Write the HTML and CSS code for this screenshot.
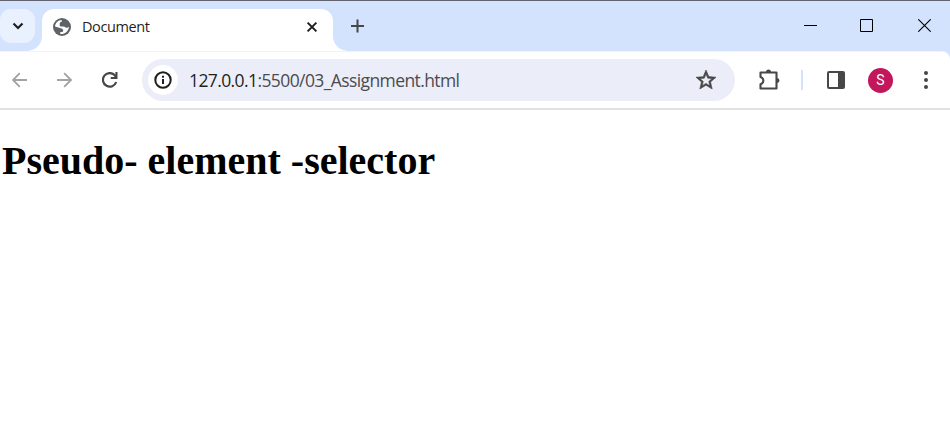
FILE: index.html
```html
<!DOCTYPE html>
<html lang="en">
<head>
<meta charset="utf-8">
<title>Document</title>
<link rel="stylesheet" href="styles.css">
</head>
<body>
<header class="tabstrip">
  <div class="strip-left">
    <div class="search-tabs"><svg width="12" height="12" viewBox="0 0 12 12"><path d="M1.500 3.500 6 8l4.500-4.500" fill="none" stroke="#1f1f1f" stroke-width="2.200"/></svg></div>
  </div>
  <div class="tab-slot">
    <div class="tab">
      <svg class="globe" width="18" height="18" viewBox="0 0 18 18"><circle cx="9" cy="9" r="9" fill="#5f6368"/><path fill="#fff" d="M2 8.500C2.300 5 5 2.200 8.700 2v1.800c-1.200 0-2 .8-2 2v1.400c0 .9.700 1.300 1.700 1.300h2.100c1.300 0 1.800 1 2.900 1.200.9.200 1.700-.3 2.500-.9-.1 3.400-2.600 6.300-6.200 7.100H7.300v-1.800h1.200c1 0 1.700-.6 1.700-1.600 0-1.100-.6-1.800-1.800-2.100L4.700 9.300z"/></svg>
      <span class="tab-title">Document</span>
      <svg class="close-tab" width="12" height="12" viewBox="0 0 12 12"><path d="M1.600 1.600l8.800 8.800M10.400 1.600l-8.800 8.800" stroke="#1f1f1f" stroke-width="2"/></svg>
    </div>
  </div>
  <div class="strip-right">
    <svg class="new-tab" width="14" height="14" viewBox="0 0 14 14"><path d="M6.500 .5v13M0 7h13" stroke="#474747" stroke-width="2"/></svg>
    <div class="window-buttons">
      <svg width="13" height="13" viewBox="0 0 13 13"><path d="M0 6.500h13" stroke="#000"/></svg>
      <svg width="13" height="13" viewBox="0 0 13 13"><path d="M.5.5h12v12H.5z" fill="none" stroke="#000"/></svg>
      <svg class="close-window" width="13" height="13" viewBox="0 0 13 13"><path d="M.3.3l12.400 12.400M12.700.3.3 12.700" stroke="#000" stroke-width="1.100"/></svg>
    </div>
  </div>
</header>
<div class="toolbar-back">
<nav class="toolbar">
  <div class="nav-buttons">
    <svg width="16" height="16" viewBox="0 0 16 16"><path d="M15 8H1.500M7.800 1.200 1 8l6.800 6.800" fill="none" stroke="#a3a3a3" stroke-width="1.900"/></svg>
    <svg width="16" height="16" viewBox="0 0 16 16"><path d="M0 8H13.500M7.200 1.200 14 8l-6.800 6.800" fill="none" stroke="#a3a3a3" stroke-width="1.900"/></svg>
    <svg width="16" height="16" viewBox="0 0 16 16"><path d="M14.200 10A6.800 6.800 0 1 1 12.800 3.300L14 5" fill="none" stroke="#474747" stroke-width="2.200"/><path d="M15.500 0v7H8.700V5h4.700V0z" fill="#474747"/></svg>
  </div>
  <div class="omnibox">
    <div class="site-info"><svg width="18" height="18" viewBox="0 0 18 18"><circle cx="9" cy="9" r="7.700" fill="none" stroke="#1f1f1f" stroke-width="2"/><path d="M9 8v5M9 4.800v2" stroke="#1f1f1f" stroke-width="2"/></svg></div>
    <span class="url"><span class="host">127.0.0.1</span>:5500/03_Assignment.html</span>
    <svg class="star" width="24" height="24" viewBox="0 0 24 24"><path fill="#474747" stroke="#474747" stroke-width=".6" d="M22 9.240l-7.190-.62L12 2 9.190 8.630 2 9.240l5.460 4.730L5.820 21 12 17.270 18.180 21l-1.630-7.030L22 9.240zM12 15.400l-3.760 2.270 1-4.280-3.320-2.880 4.380-.38L12 6.100l1.710 4.040 4.380.38-3.320 2.880 1 4.280L12 15.400z"/></svg>
  </div>
  <div class="actions">
    <svg class="puzzle" width="22" height="22" viewBox="0 0 22 22"><path d="M2.500 3.500h16v16h-16v-4.300c1.800-.5 2.900-1.800 2.900-3.600S4.300 8.500 2.500 8z" fill="none" stroke="#474747" stroke-width="2.100" stroke-linejoin="round"/><path d="M8 3a2.500 2.500 0 0 1 5 0M19 9a2.500 2.500 0 0 1 0 5" fill="#474747"/></svg>
    <i class="divider"></i>
    <svg class="panel" width="18" height="18" viewBox="0 0 18 18"><rect x="1" y="1" width="16" height="16" rx="1" fill="none" stroke="#474747" stroke-width="2"/><path d="M11 1h6v16h-6z" fill="#474747"/></svg>
    <div class="avatar">S</div>
    <svg class="menu" width="4" height="18" viewBox="0 0 4 18"><g fill="#474747"><circle cx="2" cy="2" r="2"/><circle cx="2" cy="9" r="2"/><circle cx="2" cy="16" r="2"/></g></svg>
  </div>
</nav>
</div>
<main><h1>Pseudo- element -selector</h1></main>
</body>
</html>
```

FILE: styles.css
```css
* { box-sizing: border-box; }
body { margin: 0; background: #fff; font-family: "Open Sans", "Noto Sans", sans-serif; height: 435px; overflow: hidden; }
svg { display: block; flex: none; }
.tabstrip { display: flex; height: 51px; border-top: 1px solid #62636f; }
.strip-left { width: 42px; background: #d3e3fd; border-bottom-right-radius: 15px; padding-top: 8px; }
.search-tabs { width: 35px; height: 34px; border-radius: 11px; background: #e9f1fe; display: flex; align-items: center; justify-content: center; padding-bottom: 1px; }
.tab-slot { width: 291px; padding-top: 8px; background: linear-gradient(#d3e3fd 25px, #fff 25px); }
.tab { height: 42px; background: #fff; border-radius: 12px 12px 0 0; display: flex; align-items: center; padding: 0 15px 7px 11px; }
.tab-title { margin-left: 11px; font-size: 14.5px; letter-spacing: -0.4px; color: #1f1f1f; flex: 1; line-height: 20px; }
.strip-right { flex: 1; background: #d3e3fd; border-radius: 0 0 0 15px; display: flex; justify-content: space-between; padding: 18px 19px 0 18px; }
.window-buttons { display: flex; gap: 43px; }
.close-window { margin-left: 2px; }
.toolbar-back { background: linear-gradient(to right, #fff 900px, #d3e3fd 900px); }
.toolbar { display: flex; align-items: center; height: 59px; background: #fff; border-bottom: 2px solid #e2e2e2; border-top: 1px solid #eef4fe; border-top-right-radius: 8px; }
.nav-buttons { width: 142px; display: flex; gap: 29px; padding-left: 12px; }
.omnibox { width: 593px; height: 42px; border-radius: 21px; background: #ebeef8; display: flex; align-items: center; padding: 0 17px 0 6px; }
.site-info { width: 30px; height: 30px; border-radius: 50%; background: #fff; display: flex; align-items: center; justify-content: center; }
.url { margin-left: 11px; flex: 1; font-size: 17.5px; line-height: 24px; color: #4b4b4f; letter-spacing: -0.6px; white-space: nowrap; }
.host { color: #1f1f1f; }
.actions { flex: 1; display: flex; align-items: center; }
.puzzle { margin-left: 23px; }
.divider { width: 2px; height: 20px; background: #d3e3fd; margin-left: 21px; }
.panel { margin-left: 24px; }
.avatar { margin-left: 23px; width: 25px; height: 25px; border-radius: 50%; background: #c2185b; color: #fff; font: 14px/25px Roboto, sans-serif; text-align: center; }
.menu { margin-left: 31px; }
main { padding: 27px 0 0 2px; }
h1 { margin: 0; font: bold 40px/48px "Liberation Serif", serif; color: #000; }
```
